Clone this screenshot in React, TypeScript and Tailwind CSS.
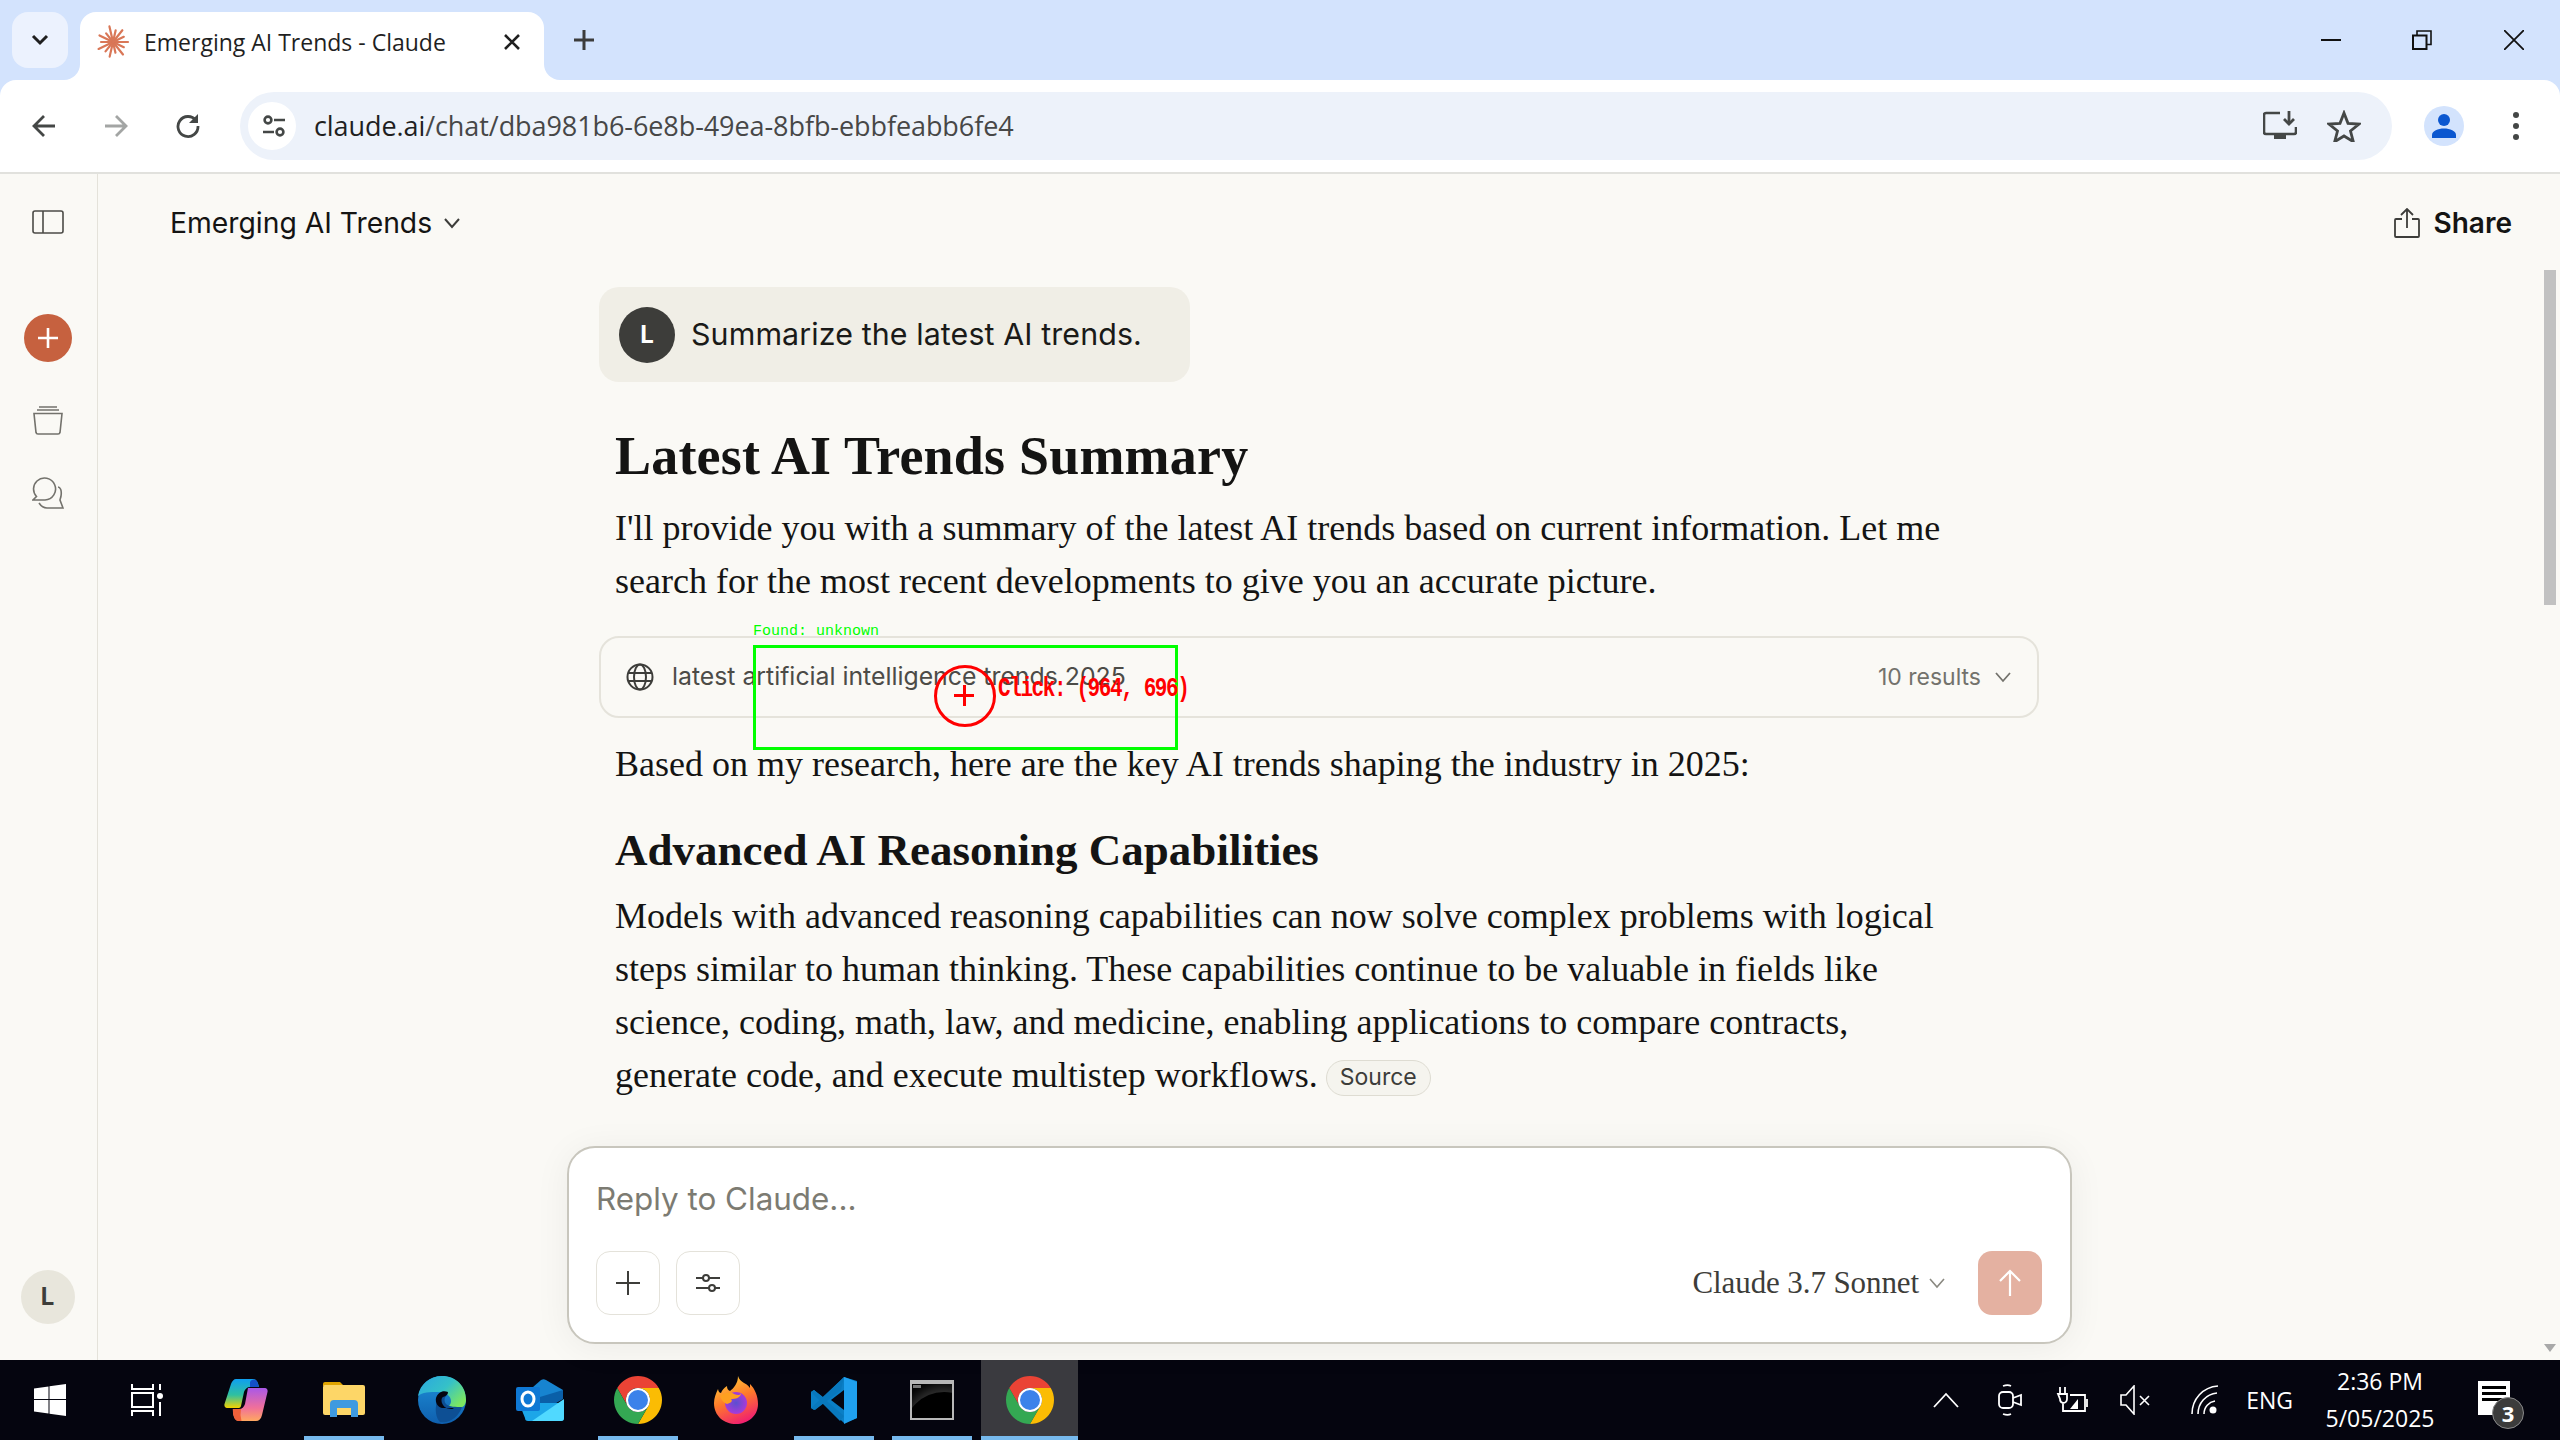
import React from "react";

const SANS = "font-['Inter','Liberation_Sans',sans-serif]";
const CHROME = "font-['Open_Sans','Noto_Sans',sans-serif]";
const SERIF = "font-['Liberation_Serif','Times_New_Roman',serif]";

function ChromeLogo() {
  return (
    <svg width="48" height="48" viewBox="0 0 48 48">
      <path d="M24 12h20.78A24 24 0 0 0 3.22 12L13.6 30A12 12 0 0 1 24 12z" fill="#ea4335" />
      <path d="M44.78 12H24a12 12 0 0 1 10.39 18L24 48A24 24 0 0 0 44.78 12z" fill="#fbbc04" />
      <path d="M3.22 12A24 24 0 0 0 24 48l10.39-18a12 12 0 0 1-20.79 0z" fill="#34a853" />
      <circle cx="24" cy="24" r="12" fill="#fff" />
      <circle cx="24" cy="24" r="10" fill="#3b82ea" />
    </svg>
  );
}

function ClaudeStar({ size = 34 }: { size?: number }) {
  const rays = [15, 12, 16, 11, 15, 12, 16, 12, 15, 11, 16, 12, 15, 12];
  return (
    <svg width={size} height={size} viewBox="0 0 34 34">
      {rays.map((r, i) => {
        const a = (i / rays.length) * Math.PI * 2;
        return (
          <line key={i} x1="17" y1="17" x2={17 + Math.cos(a) * r} y2={17 + Math.sin(a) * r} stroke="#d97757" strokeWidth="2.2" strokeLinecap="round" />
        );
      })}
    </svg>
  );
}

function TabStrip() {
  return (
    <div className="h-20 shrink-0 bg-[#d3e3fd] flex items-start pl-3 pt-3">
      <div className="w-14 h-14 rounded-2xl bg-[#ecf2fe] flex items-center justify-center">
        <svg width="20" height="14" viewBox="0 0 20 14" fill="none"><path d="M3 3l7 7 7-7" stroke="#1f1f1f" strokeWidth="3" /></svg>
      </div>
      <div className="relative ml-3 w-[464px] h-[68px] bg-white rounded-t-2xl flex items-center pl-4 pb-2">
        <div className="absolute -left-4 bottom-0 w-4 h-4 bg-white"><div className="w-4 h-4 bg-[#d3e3fd] rounded-br-2xl" /></div>
        <div className="absolute -right-4 bottom-0 w-4 h-4 bg-white"><div className="w-4 h-4 bg-[#d3e3fd] rounded-bl-2xl" /></div>
        <ClaudeStar />
        <span className={`${CHROME} ml-[14px] text-[23px] text-[#1f1f1f] whitespace-nowrap`}>Emerging AI Trends - Claude</span>
        <svg className="absolute left-[422px] top-[20px]" width="20" height="20" viewBox="0 0 20 20"><path d="M3 3l14 14M17 3L3 17" stroke="#1f1f1f" strokeWidth="2.6" /></svg>
      </div>
      <svg className="ml-[28px] mt-4" width="24" height="24" viewBox="0 0 24 24"><path d="M12 2v20M2 12h20" stroke="#3c3c3c" strokeWidth="3" /></svg>
      <div className="ml-auto flex items-center h-14 pr-[36px]">
        <svg width="20" height="4" viewBox="0 0 20 4"><path d="M0 2h20" stroke="#111" strokeWidth="2" /></svg>
        <svg className="ml-[71px]" width="20" height="20" viewBox="0 0 20 20" fill="none"><path d="M1 5.5h13.5V19H1z" stroke="#111" strokeWidth="2" /><path d="M5 5V1h14v13.5h-4" stroke="#111" strokeWidth="1.6" /></svg>
        <svg className="ml-[72px]" width="20" height="20" viewBox="0 0 20 20"><path d="M0 0l20 20M20 0L0 20" stroke="#111" strokeWidth="1.8" /></svg>
      </div>
    </div>
  );
}

function Toolbar() {
  return (
    <div className="h-[94px] shrink-0 bg-[#d3e3fd]">
      <div className="h-[94px] bg-white rounded-t-2xl border-b-2 border-[#e1e1dd] flex items-start pt-3">
        <div className="w-[240px] h-[68px] flex items-center pl-[32px]">
          <svg width="24" height="24" viewBox="0 0 24 24" fill="none"><path d="M23 12H3M12 2L2 12l10 10" stroke="#444746" strokeWidth="2.8" /></svg>
          <svg className="ml-[48px]" width="24" height="24" viewBox="0 0 24 24" fill="none"><path d="M1 12h20M12 2l10 10-10 10" stroke="#a3a5a4" strokeWidth="2.8" /></svg>
          <svg className="ml-[47px]" width="26" height="26" viewBox="0 0 26 26" fill="none"><path d="M21 7.5A10 10 0 1 0 23 13" stroke="#444746" strokeWidth="2.8" /><path d="M23 1v9h-9z" fill="#444746" /></svg>
        </div>
        <div className="w-[2152px] h-[68px] rounded-full bg-[#edf2fa] flex items-center pl-2">
          <div className="w-12 h-12 rounded-full bg-white flex items-center justify-center pl-[3px]">
            <svg width="26" height="26" viewBox="0 0 26 26" fill="none" stroke="#444746" strokeWidth="2.6"><circle cx="7" cy="7" r="3.4" /><path d="M13 7h11M2 19h11" /><circle cx="19" cy="19" r="3.4" /></svg>
          </div>
          <span className={`${CHROME} ml-[18px] text-[27px] text-[#1f1f1f] whitespace-nowrap tracking-[-0.08px]`}>claude.ai<span className="text-[#474747]">/chat/dba981b6-6e8b-49ea-8bfb-ebbfeabb6fe4</span></span>
          <div className="ml-auto flex items-center pr-[31px]">
            <svg width="34" height="30" viewBox="0 0 34 30" fill="none"><path d="M17 2H3a2 2 0 0 0-2 2v17a2 2 0 0 0 2 2h28a2 2 0 0 0 2-2v-5" stroke="#444746" strokeWidth="2.6" /><path d="M11 23h12v5H11z" fill="#444746" /><path d="M26 0v12" stroke="#444746" strokeWidth="2.8" /><path d="M21 8l5 5 5-5" stroke="#444746" strokeWidth="2.8" /></svg>
            <svg className="ml-[30px]" width="34" height="32" viewBox="0 0 34 32" fill="none"><path d="M17 3l4 10.3 11 .7-8.5 7 2.8 10.7L17 26l-9.3 5.7L10.500 21 2 14l11-.7z" stroke="#444746" strokeWidth="2.8" /></svg>
          </div>
        </div>
        <div className="flex items-center h-[68px] pl-[32px]">
          <div className="w-10 h-10 rounded-full bg-[#d3e3fd] flex items-center justify-center">
            <svg width="26" height="26" viewBox="0 0 26 26" fill="#0b57d0"><circle cx="13" cy="7" r="6" /><path d="M1 25v-3c0-4 6-6.500 12-6.500s12 2.500 12 6.500v3z" /></svg>
          </div>
          <svg className="ml-[48px]" width="8" height="28" viewBox="0 0 8 28" fill="#444746"><circle cx="4" cy="3" r="3" /><circle cx="4" cy="14" r="3" /><circle cx="4" cy="25" r="3" /></svg>
        </div>
      </div>
    </div>
  );
}

function Sidebar() {
  return (
    <div className="w-[98px] shrink-0 border-r border-[#e4e2da] flex flex-col items-center pr-[2px]">
      <svg className="mt-[36px]" width="32" height="24" viewBox="0 0 32 24" fill="none" stroke="#4c4b47" strokeWidth="1.6"><rect x="1" y="1" width="30" height="22" rx="2" /><path d="M11 1v22" /></svg>
      <div className="mt-[80px] w-12 h-12 rounded-full bg-[#c6613f] flex items-center justify-center">
        <svg width="22" height="22" viewBox="0 0 22 22"><path d="M11 1v20M1 11h20" stroke="#fff" strokeWidth="2.6" /></svg>
      </div>
      <svg className="mt-[43px]" width="30" height="30" viewBox="0 0 30 30" fill="none" stroke="#73726c" strokeWidth="1.6"><path d="M6 2h18M4 5h22" /><path d="M1 8.500h28l-2 19a2 2 0 0 1-2 1.500H5a2 2 0 0 1-2-1.500z" /></svg>
      <svg className="mt-[41px]" width="32" height="34" viewBox="0 0 32 34" fill="none" stroke="#73726c" strokeWidth="1.6"><path d="M5 5a11 11 0 1 1 8 19H1l3.500-3.500A11 11 0 0 1 5 5z" /><path d="M26 11c2 0 4 3 3 9-.3 2-1 3-1 4l3 8H15c-3 0-6-2-8-5" /></svg>
      <div className={`${SANS} mt-auto mb-[36px] w-[54px] h-[54px] rounded-full bg-[#e8e6dc] flex items-center justify-center text-[24px] font-bold text-[#3d3d3a]`}>L</div>
    </div>
  );
}

function Thread() {
  return (
    <div className="flex-1 min-h-0 pl-[501px] pt-[15px]">
      <div className="w-[591px] h-[95px] rounded-[20px] bg-[#f0eee6] flex items-center pl-5">
        <div className={`${SANS} w-14 h-14 rounded-full bg-[#3d3d3a] flex items-center justify-center text-white font-bold text-[24px]`}>L</div>
        <span className={`${SANS} ml-[16px] text-[30.400px] text-[#1a1a18] whitespace-nowrap tracking-[0.1px]`}>Summarize the latest AI trends.</span>
      </div>
      <div className={`${SERIF} pl-[16px] text-[#141413]`}>
        <h1 className="mt-[45px] text-[54px] leading-[58px] font-bold whitespace-nowrap tracking-[0.2px]">Latest AI Trends Summary</h1>
        <p className="mt-[17px] text-[36px] leading-[53px] whitespace-nowrap">I'll provide you with a summary of the latest AI trends based on current information. Let me<br />search for the most recent developments to give you an accurate picture.</p>
      </div>
      <div className="mt-[28px] w-[1440px] h-[82px] rounded-[20px] border-2 border-[#e5e3db] flex items-center pl-[25px] pr-[25px]">
        <svg width="28" height="28" viewBox="0 0 28 28" fill="none" stroke="#3d3d3a" strokeWidth="2"><circle cx="14" cy="14" r="12.500" /><ellipse cx="14" cy="14" rx="6" ry="12.500" /><path d="M2 10h24M2 18h24" /></svg>
        <span className={`${SANS} ml-[18px] text-[24.800px] text-[#4c4b47] whitespace-nowrap`}>latest artificial intelligence trends 2025</span>
        <span className={`${SANS} ml-auto text-[23px] text-[#73726c] whitespace-nowrap`}>10 results</span>
        <svg className="ml-[13px]" width="18" height="12" viewBox="0 0 18 12" fill="none"><path d="M2 2l7 8 7-8" stroke="#73726c" strokeWidth="1.8" /></svg>
      </div>
      <div className={`${SERIF} pl-[16px] text-[#141413]`}>
        <p className="mt-[20px] text-[36px] leading-[53px] whitespace-nowrap">Based on my research, here are the key AI trends shaping the industry in 2025:</p>
        <h2 className="mt-[34px] text-[45px] leading-[50px] font-bold whitespace-nowrap">Advanced AI Reasoning Capabilities</h2>
        <p className="mt-[15px] text-[36px] leading-[53px] whitespace-nowrap">
          Models with advanced reasoning capabilities can now solve complex problems with logical<br />
          steps similar to human thinking. These capabilities continue to be valuable in fields like<br />
          science, coding, math, law, and medicine, enabling applications to compare contracts,<br />
          generate code, and execute multistep workflows.
          <span className={`${SANS} ml-[8px] inline-flex items-center h-9 px-[13px] rounded-full border border-[#dedcd2] bg-[#f5f4ee] text-[23px] text-[#3d3d3a] align-[2px]`}>Source</span>
        </p>
      </div>
    </div>
  );
}

function Composer() {
  return (
    <div className="relative ml-[469px] mb-4 w-[1505px] h-[198px] shrink-0 rounded-[28px] bg-white border-2 border-[#c8c6bd] shadow-[0_4px_36px_rgba(0,0,0,0.06)] flex flex-col pl-[27px] pr-[28px]">
      <div className={`${SANS} mt-[31px] text-[31.400px] leading-[40px] text-[#7c7b72]`}>Reply to Claude...</div>
      <div className="mt-[32px] flex items-center">
        <div className="w-16 h-16 rounded-[14px] border border-[#e4e2da] flex items-center justify-center">
          <svg width="26" height="26" viewBox="0 0 26 26"><path d="M13 1v24M1 13h24" stroke="#3d3d3a" strokeWidth="2" /></svg>
        </div>
        <div className="ml-4 w-16 h-16 rounded-[14px] border border-[#e4e2da] flex items-center justify-center">
          <svg width="26" height="22" viewBox="0 0 26 22" fill="none" stroke="#3d3d3a" strokeWidth="2"><path d="M1 6h7M14 6h11M1 16h13M20 16h5" /><circle cx="11" cy="6" r="3" /><circle cx="17" cy="16" r="3" /></svg>
        </div>
        <span className={`${SERIF} ml-auto text-[31px] text-[#3d3d3a] whitespace-nowrap tracking-[-0.1px]`}>Claude 3.7 Sonnet</span>
        <svg className="ml-[9px]" width="18" height="12" viewBox="0 0 18 12" fill="none"><path d="M2 2l7 8 7-8" stroke="#8a8981" strokeWidth="1.6" /></svg>
        <div className="ml-[32px] w-16 h-16 rounded-[14px] bg-[#e4b1a1] flex items-center justify-center">
          <svg width="24" height="28" viewBox="0 0 24 28" fill="none"><path d="M12 27V2M2 12L12 2l10 10" stroke="#fff" strokeWidth="2.2" /></svg>
        </div>
      </div>
    </div>
  );
}

function WinLogo() {
  return (
    <svg width="32" height="32" viewBox="0 0 32 32" fill="#fff"><path d="M0 4.500l14.500-2V15H0zM15.500 2.300L32 0v15H15.500zM0 16h14.500v13.500L0 27.500zM15.500 16H32v16l-16.500-2.300z" /></svg>
  );
}
function TaskView() {
  return (
    <svg width="34" height="32" viewBox="0 0 34 32" fill="none" stroke="#fff" strokeWidth="2"><path d="M1 0v5h21V0M1 9h21v14H1zM1 32v-5h21v5M29 0v6M29 18v14" /><circle cx="29" cy="12" r="3" fill="#fff" stroke="none" /></svg>
  );
}
function Copilot() {
  return (
    <svg width="44" height="44" viewBox="0 0 44 44">
      <defs>
        <linearGradient id="cp1" x1="0" y1="0" x2="0" y2="1"><stop offset="0" stopColor="#0f9ff0" /><stop offset=".55" stopColor="#2fc0a0" /><stop offset="1" stopColor="#f4d200" /></linearGradient>
        <linearGradient id="cp2" x1="0" y1="0" x2="0" y2="1"><stop offset="0" stopColor="#a958e8" /><stop offset=".6" stopColor="#f0709a" /><stop offset="1" stopColor="#ffa860" /></linearGradient>
      </defs>
      <path d="M12 1h17c3 0 5 3 6 8h-9c-3 0-5 2-6 5l-3 14c-.5 2-2 2-3 2H3c-2 0-3-2-2.500-4L7 6c1-3 3-5 5-5z" fill="url(#cp1)" />
      <path d="M24 10h17c2 0 3 2 2.500 4L38 37c-1 4-3 6-6 6H15c-3 0-5-3-6-8l-.2-4H15c3 0 5-2 6-5l3-16z" fill="url(#cp2)" />
      <path d="M26 4c2-3 5-3 7-1l2 6h-9z" fill="#1450c8" />
      <path d="M9 31h8l-.500 6 1 6h-3c-3 0-5-3-5.500-8z" fill="#f0603a" />
    </svg>
  );
}
function Explorer() {
  return (
    <svg width="42" height="36" viewBox="0 0 42 36">
      <path d="M0 2a2 2 0 0 1 2-2h15l4 4h-21z" fill="#e0a400" />
      <rect x="0" y="3" width="42" height="30" rx="2" fill="#fdd667" />
      <path d="M7 35V22a4 4 0 0 1 4-4h20a4 4 0 0 1 4 4v13h-7V26H14v9z" fill="#3f9ae0" />
    </svg>
  );
}
function Edge() {
  return (
    <svg width="48" height="48" viewBox="0 0 48 48">
      <defs>
        <linearGradient id="ed1" x1="0" y1="0" x2="1" y2=".7"><stop offset="0" stopColor="#2aa6e0" /><stop offset=".55" stopColor="#35c1c8" /><stop offset="1" stopColor="#7ce760" /></linearGradient>
        <linearGradient id="ed2" x1="0" y1="0" x2="0" y2="1"><stop offset="0" stopColor="#1e90d8" /><stop offset="1" stopColor="#0f5fae" /></linearGradient>
      </defs>
      <circle cx="24" cy="24" r="24" fill="url(#ed2)" />
      <path d="M0 20C2 8 12 0 24 0c14 0 24 10 24 24 0 5-3 8-8 8H27c4-1 6-4 6-7 0-5-5-9-13-9-8 0-16 0-20 4z" fill="url(#ed1)" />
      <path d="M18 30c0-8 5-12 10-10-2 2-2 6 0 8 3 3 10 3 16 3-3 9-12 17-22 15-3-3-5-9-4-16z" fill="#0d4f94" />
      <path d="M30 16c-5-2-10 0-12 6-1 5 2 9 6 10h10c2 0 2 1 1 1-5 0-8-1-10-4-2-3-2-7 0-8 3-1 5-2 5-5z" fill="#05050f" />
    </svg>
  );
}
function Outlook() {
  return (
    <svg width="48" height="42" viewBox="0 0 48 42">
      <path d="M8 16L25 1c2-1 3-1 5 0l17 10v8L14 40z" fill="#1784d0" />
      <path d="M14 21L47 11v9L30 30z" fill="#0a5fa8" />
      <path d="M3 24h45v15a3 3 0 0 1-3 3H12a3 3 0 0 1-3-3z" fill="#1ca6e8" />
      <path d="M16 42l32-22v19a3 3 0 0 1-3 3z" fill="#50d9ff" />
      <rect x="0" y="8" width="24" height="24" rx="2" fill="#0f78d4" />
      <ellipse cx="12" cy="20" rx="6" ry="7" fill="none" stroke="#fff" strokeWidth="3" />
    </svg>
  );
}
function Firefox() {
  return (
    <svg width="44" height="48" viewBox="0 0 44 48">
      <defs>
        <linearGradient id="ff1" x1=".2" y1="0" x2=".6" y2="1"><stop offset="0" stopColor="#ffd23a" /><stop offset=".5" stopColor="#ff7a2a" /><stop offset="1" stopColor="#f01f70" /></linearGradient>
        <radialGradient id="ff2" cx=".5" cy=".5" r=".5"><stop offset="0" stopColor="#5b4fd0" /><stop offset="1" stopColor="#a83ad8" /></radialGradient>
      </defs>
      <path d="M24 0c2 7 8 6 12 12 0-2 0-3 0-4 5 5 8 12 8 20 0 12-10 20-22 20S0 40 0 27c0-5 2-10 4-14 .5 3 2 4 3 4 1-3 3-5 6-7 0 3 1 4 3 5 4-3 8-8 8-15z" fill="url(#ff1)" />
      <circle cx="22" cy="27" r="11" fill="url(#ff2)" />
      <path d="M6 20c4-3 10-5 14-2 3 1 6 2 7-1 0 5-6 6-10 6 2 2 0 4-4 5-3-1-6-4-7-8z" fill="#ffa020" />
    </svg>
  );
}
function VSCode() {
  return (
    <svg width="48" height="48" viewBox="0 0 48 48">
      <path d="M34 1L13 21 4 14 1 16v16l3 2 9-7 21 20 13-5V5z" fill="#0a7fc6" />
      <path d="M1 16l3-2 30 26-4 5-1-1zM1 32l28-26 5-5-3 13-26 20z" fill="#0878bd" />
      <path d="M34 1l13 5v36l-13 6z" fill="#1fa0ee" />
      <path d="M34 14v20L21 24z" fill="#05050f" />
    </svg>
  );
}
function Cmd() {
  return (
    <div className="relative w-[44px] h-[40px] border-2 border-[#b8b8b8] border-t-4 bg-black overflow-hidden">
      <div className="absolute -left-4 top-[2px] w-[80px] h-[80px] rounded-full bg-[#000] shadow-[0_-6px_12px_rgba(255,255,255,0.2)] translate-x-[8px] translate-y-[6px]" />
      <div className="absolute left-[1px] top-[1px] w-[8px] h-[3px] bg-[#777]" />
    </div>
  );
}

function Slot({ children, on, active }: { children: React.ReactNode; on?: boolean; active?: boolean }) {
  return (
    <div className={`relative h-20 flex items-center justify-center shrink-0 ${active ? "w-[97px] bg-[#3a3a3f]" : "w-[98px]"}`}>
      {children}
      {on ? <div className="absolute bottom-0 left-[9px] right-[9px] h-1 bg-[#76b9ed]" /> : null}
      {active ? <div className="absolute bottom-0 left-0 right-0 h-1 bg-[#76b9ed]" /> : null}
    </div>
  );
}

function Taskbar() {
  return (
    <div className="h-20 shrink-0 bg-[#05050f] flex items-center pl-[1px]">
      <Slot><WinLogo /></Slot>
      <Slot><TaskView /></Slot>
      <Slot><Copilot /></Slot>
      <Slot on><Explorer /></Slot>
      <Slot><Edge /></Slot>
      <Slot><Outlook /></Slot>
      <Slot on><ChromeLogo /></Slot>
      <Slot><Firefox /></Slot>
      <Slot on><VSCode /></Slot>
      <Slot on><Cmd /></Slot>
      <Slot active><ChromeLogo /></Slot>
      <div className="ml-auto flex items-center h-20 pr-[4px] text-white">
        <svg width="26" height="16" viewBox="0 0 26 16" fill="none"><path d="M1 15L13 2l12 13" stroke="#fff" strokeWidth="1.8" /></svg>
        <svg className="ml-[39px]" width="24" height="32" viewBox="0 0 24 32" fill="none" stroke="#fff" strokeWidth="1.8"><rect x="1" y="8" width="14" height="16" rx="4" /><path d="M15 14l8-3v10l-8-3M5 2c3-1 6-1 8 0M5 30c3 1 6 1 8 0" /></svg>
        <svg className="ml-[34px]" width="32" height="26" viewBox="0 0 32 26" fill="none" stroke="#fff" strokeWidth="1.800"><path d="M4 0v7M9 0v7M2 7h9v5a4 4 0 0 1-4 4 4 4 0 0 1-3-4zM7 16v8h22V8H14M31 12v8" /><path d="M14 22l8-10v10z" fill="#fff" stroke="none" /></svg>
        <svg className="ml-[32px]" width="32" height="30" viewBox="0 0 32 30" fill="none" stroke="#fff" strokeWidth="1.6"><path d="M1 10h5l8-9v28l-8-9H1zM20 11l9 9M29 11l-9 9" /></svg>
        <svg className="ml-[39px]" width="28" height="30" viewBox="0 0 28 30" fill="none" stroke="#fff" strokeWidth="1.6"><path d="M1 29C1 14 12 2 27 1M7 29C7 18 15 9 26 8M13 29c0-7 5-12 11-13" /><circle cx="22" cy="25" r="3.500" fill="#fff" stroke="none" /></svg>
        <span className={`${CHROME} ml-[27px] text-[23px] whitespace-nowrap`}>ENG</span>
        <div className={`${CHROME} ml-[22px] w-[130px] flex flex-col items-center text-[23px] leading-[37px]`}>
          <span className="whitespace-nowrap">2:36 PM</span>
          <span className="whitespace-nowrap">5/05/2025</span>
        </div>
        <div className="relative ml-[33px] mr-[46px] w-[32px] h-[34px] bg-white flex flex-col gap-[3px] px-[4px] pt-[5px] mb-[4px]">
          <div className="h-[3px] bg-black" /><div className="h-[3px] bg-black" /><div className="h-[3px] bg-black" />
          <div className={`${CHROME} absolute left-[14px] top-[16px] w-[32px] h-[32px] rounded-full bg-[#3c3c3c] border border-[#8a8a8a] flex items-center justify-center text-white text-[22px] font-bold`}>3</div>
        </div>
      </div>
    </div>
  );
}

function Annotations() {
  return (
    <>
      <div className="absolute left-[753px] top-[645px] w-[425px] h-[105px] border-[3px] border-[#00ff00]" />
      <div className="absolute left-[753px] top-[623px] text-[15px] leading-[18px] text-[#00ff00] font-['Liberation_Mono',monospace] whitespace-nowrap">Found: unknown</div>
      <div className="absolute left-[934px] top-[665px] w-[62px] h-[62px] rounded-full border-[3px] border-[#ff0000]" />
      <div className="absolute left-[954px] top-[694px] w-[20px] h-[3px] bg-[#ff0000]" />
      <div className="absolute left-[963px] top-[685px] w-[3px] h-[21px] bg-[#ff0000]" />
      <div className="absolute left-[998px] top-[676px] origin-left scale-y-[1.3] text-[21px] leading-[28px] font-bold text-[#ff0000] font-['Liberation_Mono',monospace] whitespace-nowrap tracking-[-1.400px]">Click: (964, 696)</div>
    </>
  );
}

export default function App() {
  return (
    <div className="relative w-[2560px] h-[1440px] overflow-hidden flex flex-col bg-[#faf9f5]">
      <TabStrip />
      <Toolbar />
      <div className="relative flex-1 min-h-0 flex bg-[#faf9f5]">
        <Sidebar />
        <div className="flex-1 min-w-0 flex flex-col">
          <div className="h-[98px] shrink-0 flex items-center pl-[72px] pr-[48px]">
            <span className={`${SANS} text-[28.300px] text-[#141413] whitespace-nowrap`}>Emerging AI Trends</span>
            <svg className="ml-[11px]" width="18" height="12" viewBox="0 0 18 12" fill="none"><path d="M2 2l7 8 7-8" stroke="#3d3d3a" strokeWidth="2" /></svg>
            <svg className="ml-auto" width="26" height="30" viewBox="0 0 26 30" fill="none" stroke="#3d3d3a" strokeWidth="1.8"><path d="M13 20V2M7 7l6-6 6 6M8 11H2a1 1 0 0 0-1 1v16a1 1 0 0 0 1 1h22a1 1 0 0 0 1-1V12a1 1 0 0 0-1-1h-6" /></svg>
            <span className={`${SANS} ml-[14px] text-[28px] font-semibold text-[#141413] whitespace-nowrap`}>Share</span>
          </div>
          <Thread />
          <Composer />
        </div>
        <div className="absolute right-[4px] top-[96px] w-3 h-[335px] bg-[#c1c1c1]" />
        <svg className="absolute right-[4px] bottom-[8px]" width="12" height="8" viewBox="0 0 12 8"><path d="M0 0h12L6 8z" fill="#a8a8a8" /></svg>
      </div>
      <Taskbar />
      <Annotations />
    </div>
  );
}
